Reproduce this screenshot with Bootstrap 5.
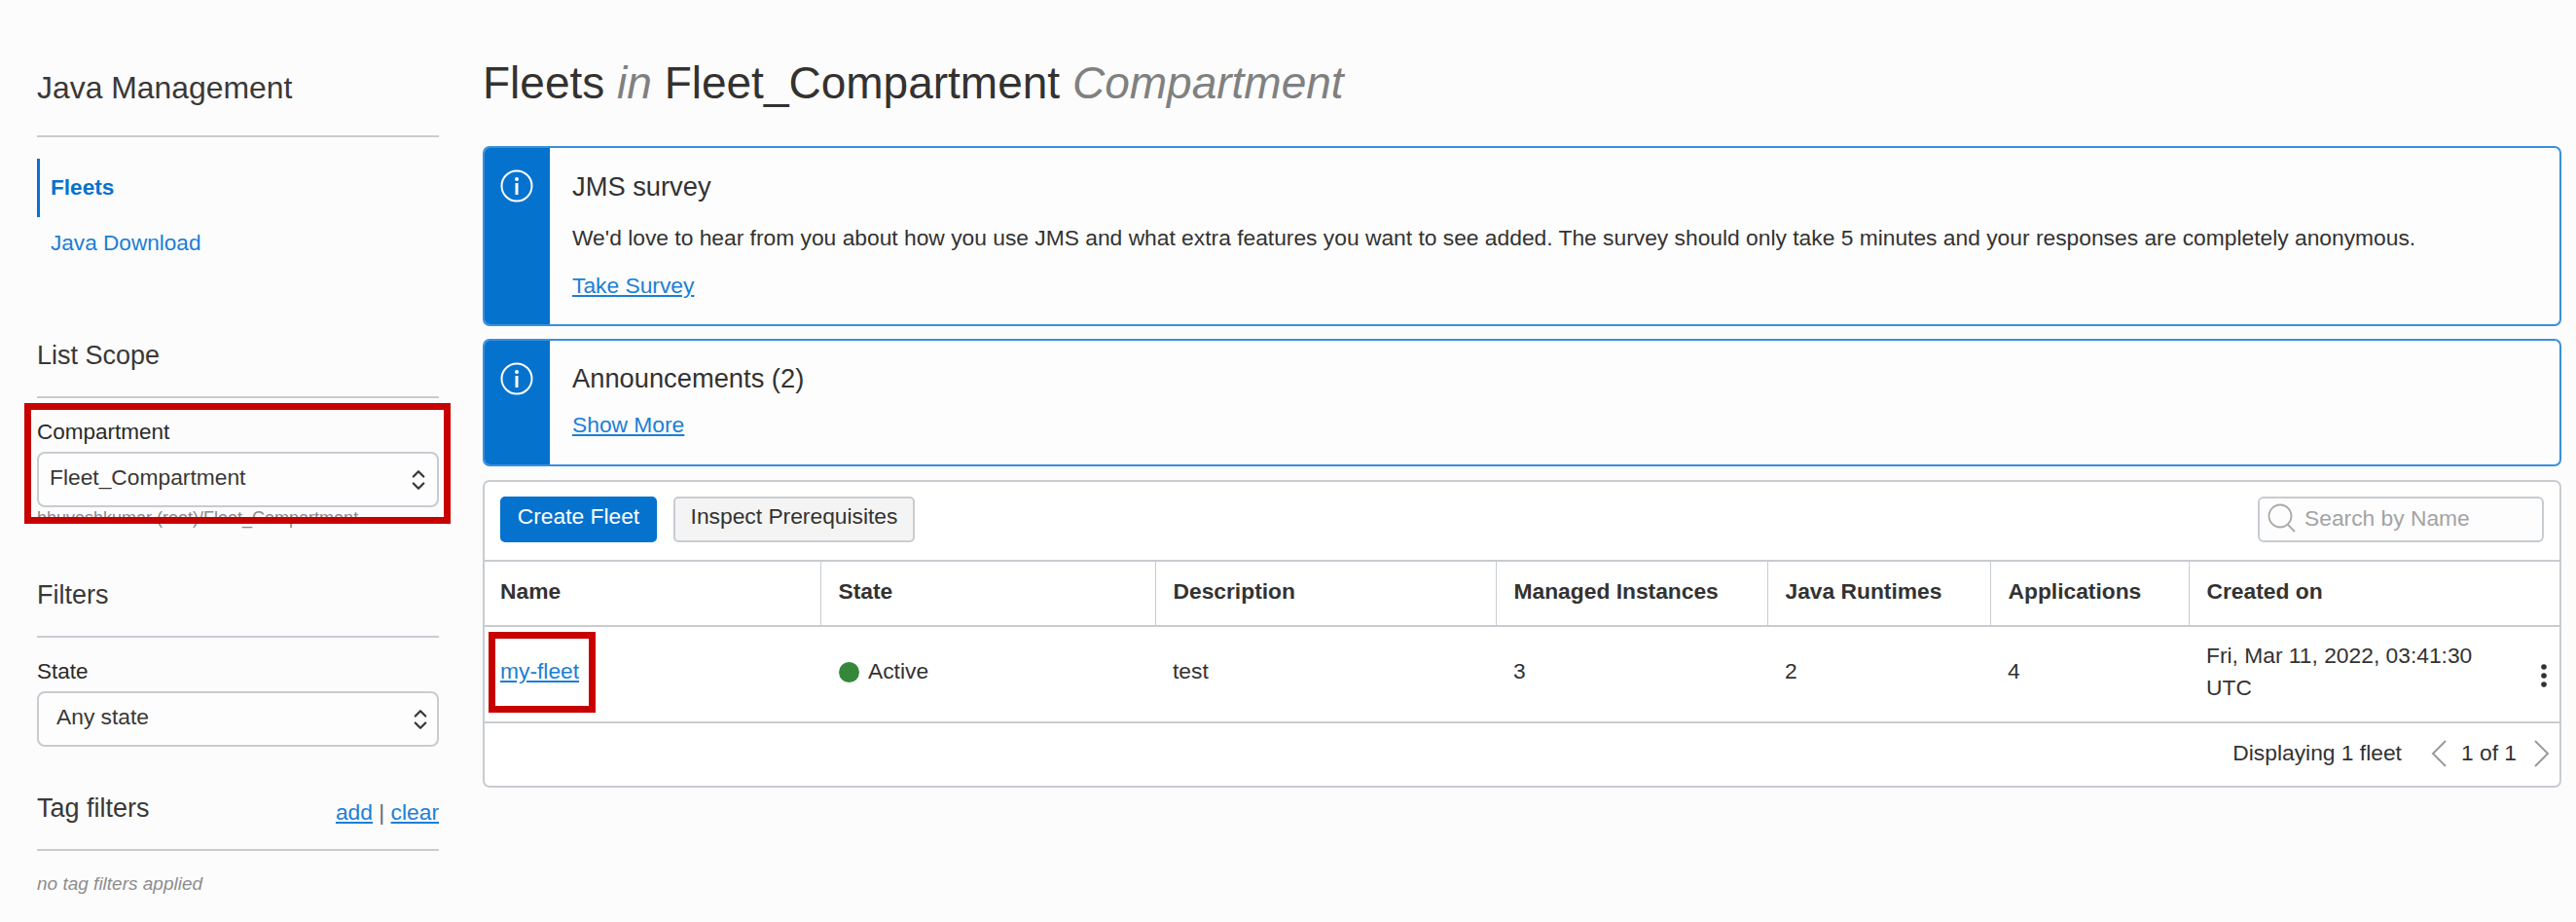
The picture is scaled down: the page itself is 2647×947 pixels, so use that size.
<!DOCTYPE html>
<html lang="en">
<head>
<meta charset="utf-8">
<title>Fleets</title>
<link href="https://cdn.jsdelivr.net/npm/bootstrap@5.3.0/dist/css/bootstrap.min.css" rel="stylesheet">
<style>
html,body{height:947px;overflow:hidden}
body{background:#fcfcfc;font-family:"Liberation Sans",Arial,sans-serif;font-size:22.8px;color:#333231}
a{color:#1b7fd6}
.page-wrap{padding:0 15px 0 38px;gap:45px;height:947px}
.side-col{width:413px;flex:none;padding-top:70px}
.main-col{flex:1 1 auto;min-width:0;padding-top:60px}
.side-head{font-size:27px;line-height:40px;color:#3a3836;border-bottom:2px solid #c8ccd1;margin:0;font-weight:400}
.head-a{padding-bottom:29px;font-size:31.9px}
.head-b{padding-bottom:22px;margin-top:65px}
.head-c{padding-bottom:22px;margin-top:48px}
.head-d{padding-bottom:22px;margin-top:43px}
.side-nav{margin-top:22px}
.side-link{display:block;height:60px;line-height:60px;padding-left:11px;font-size:22.6px;color:#1b7fd6;text-decoration:none;border-left:3px solid transparent}
.side-link.on{font-weight:700;color:#0572ce;border-left-color:#0572ce}
.side-link.off{margin-top:-3px}
.comp-field{margin-top:22px}
.field-label{font-size:22.5px;line-height:26px;color:#2b2a28;margin:0 0 7px;display:block}
.oj-select{height:57px;border:2px solid #c8ccd1;border-radius:8px;background-color:#fdfdfd;font-size:22.8px;color:#3a3836;padding:0 40px 5px 11px;background-image:url("data:image/svg+xml,%3Csvg xmlns='http://www.w3.org/2000/svg' viewBox='0 0 16 26'%3E%3Cpath d='M2 9l6-6 6 6M2 17l6 6 6-6' fill='none' stroke='%233a3836' stroke-width='2.6' stroke-linecap='round' stroke-linejoin='round'/%3E%3C/svg%3E");background-repeat:no-repeat;background-position:right 12px center;background-size:14px 24px}
.oj-select.wide-pad{padding-left:18px;background-position:right 10px center}
.path-hint{font-size:18px;line-height:22px;color:#8a8a8a;white-space:nowrap}
.red-frame{position:absolute;border:7px solid #c70000;pointer-events:none}
.frame-comp{left:-13px;right:-12px;top:-17px;bottom:5px}
.field-box{margin-top:22px}
.tag-links{font-size:22.8px;line-height:26px;color:#6b6b6b;position:relative;top:4px}
.no-tags{font-size:19px;font-style:italic;color:#8d8d8d;line-height:24px;margin-top:22px}
.page-title{font-size:46px;line-height:50px;font-weight:400;color:#333231;margin:0 0 40px}
.page-title em{color:#808080}
.info-box{border:2px solid #3a8fdc;border-radius:7px;background:#fdfdfd;overflow:hidden}
.info-one{height:185px}
.info-two{height:131px;margin-top:13px}
.info-side{width:69px;flex:none;background:#0572ce;margin:-2px 0 -2px -2px;padding-top:22px;text-align:center}
.info-main{padding-left:23px}
.info-title{font-size:27.3px;line-height:36px;color:#333231;font-weight:400;margin:0}
.info-one .info-title{padding-top:22px}
.info-two .info-title{padding-top:21px}
.info-text{font-size:22.8px;line-height:30px;margin:19px 0 0}
.info-link{font-size:22.8px;line-height:30px;display:inline-block}
.one-link{margin-top:19px}
.two-link{margin-top:14px}
.fleet-card{height:316px;margin-top:14px;border:2px solid #c8ccd1;border-radius:7px;background:#fff;overflow:hidden}
.tool-row{height:80px;padding:15px 16px 0 16px}
.oj-btn{height:47px;font-size:22.8px;line-height:1;padding:0 8px 6px;border-radius:5px}
.btn-main{background:#0572ce;color:#fff;border:2px solid #0572ce;width:161px;margin-right:17px}
.btn-alt{background:#f4f4f4;color:#333231;border:2px solid #c8ccd1;width:248px}
.search-box{width:294px;height:47px;border:2px solid #c8ccd1;border-radius:6px;background:#fdfdfd;padding:0 0 3px 8px;color:#a3a3a3;font-size:22.8px}
.search-box input{border:0;outline:0;background:transparent;width:240px;margin-left:8px;font-size:22.8px;padding:0}
.search-box input::placeholder{color:#a3a3a3;opacity:1}
.fleet-table{table-layout:fixed;width:100%;margin:0;--bs-table-bg:transparent;border-collapse:collapse}
.fleet-table th,.fleet-table td{padding:0 18px;vertical-align:middle;font-size:22.8px;color:#333231}
.fleet-table th:first-child,.fleet-table td:first-child{padding-left:16px}
.fleet-table thead tr{height:67px}
.fleet-table th{font-weight:700;padding-bottom:5px;border-top:2px solid #c8ccd1;border-bottom:2px solid #c8ccd1;border-right:1px solid #c8ccd1}
.fleet-table th:last-child{border-right:0}
.fleet-table tbody tr{height:99px}
.fleet-table td{border-bottom:2px solid #c8ccd1;line-height:33px;padding-bottom:6px;position:relative}
.c-a{width:345px}.c-b{width:344px}.c-c{width:350px}.c-d{width:279px}.c-e{width:229px}.c-f{width:204px}
.status-dot{display:inline-block;width:21px;height:21px;border-radius:50%;background:#35883a;vertical-align:-4px;margin-right:9px;margin-left:1px}
.frame-fleet{left:4px;top:5px;width:110px;height:83px}
.row-menu{position:absolute;right:12px;top:37px;line-height:0}
.foot-row{height:67px;padding-right:9px;padding-bottom:6px;font-size:22.8px}
.foot-gap{margin-right:29px}
.page-num{margin:0 17px 0 14px}
</style>
</head>
<body>
<div class="d-flex page-wrap">
  <aside class="side-col">
    <h2 class="side-head head-a">Java Management</h2>
    <nav class="side-nav">
      <a class="side-link on" href="#">Fleets</a>
      <a class="side-link off" href="#">Java Download</a>
    </nav>
    <h2 class="side-head head-b">List Scope</h2>
    <div class="comp-field position-relative">
      <label class="field-label" for="comp">Compartment</label>
      <select class="form-select oj-select" id="comp"><option>Fleet_Compartment</option></select>
      <div class="path-hint">bhuveshkumar (root)/Fleet_Compartment</div>
      <div class="red-frame frame-comp"></div>
    </div>
    <h2 class="side-head head-c">Filters</h2>
    <div class="field-box">
      <label class="field-label" for="st">State</label>
      <select class="form-select oj-select wide-pad" id="st"><option>Any state</option></select>
    </div>
    <div class="side-head head-d d-flex justify-content-between align-items-center">
      <span>Tag filters</span>
      <span class="tag-links"><a href="#">add</a> | <a href="#">clear</a></span>
    </div>
    <div class="no-tags">no tag filters applied</div>
  </aside>
  <main class="main-col">
    <h1 class="page-title">Fleets <em>in</em> Fleet_Compartment <em>Compartment</em></h1>
    <section class="info-box info-one d-flex">
      <div class="info-side">
        <svg width="34" height="34" viewBox="0 0 34 34" fill="none"><circle cx="17" cy="17" r="15.5" stroke="#fff" stroke-width="2"/><circle cx="17" cy="10" r="2" fill="#fff"/><rect x="15.5" y="14" width="3" height="12" fill="#fff"/></svg>
      </div>
      <div class="info-main">
        <h3 class="info-title">JMS survey</h3>
        <p class="info-text">We'd love to hear from you about how you use JMS and what extra features you want to see added. The survey should only take 5 minutes and your responses are completely anonymous.</p>
        <a class="info-link one-link" href="#">Take Survey</a>
      </div>
    </section>
    <section class="info-box info-two d-flex">
      <div class="info-side">
        <svg width="34" height="34" viewBox="0 0 34 34" fill="none"><circle cx="17" cy="17" r="15.5" stroke="#fff" stroke-width="2"/><circle cx="17" cy="10" r="2" fill="#fff"/><rect x="15.5" y="14" width="3" height="12" fill="#fff"/></svg>
      </div>
      <div class="info-main">
        <h3 class="info-title">Announcements (2)</h3>
        <a class="info-link two-link" href="#">Show More</a>
      </div>
    </section>
    <section class="fleet-card">
      <div class="tool-row d-flex justify-content-between align-items-start">
        <div class="d-flex">
          <button class="btn oj-btn btn-main" type="button">Create Fleet</button>
          <button class="btn oj-btn btn-alt" type="button">Inspect Prerequisites</button>
        </div>
        <div class="search-box d-flex align-items-center">
          <svg width="30" height="32" viewBox="0 0 30 32" fill="none" stroke="#a9a9a9" stroke-width="1.8"><circle cx="13" cy="14" r="11.5"/><path d="M21 23l7 7"/></svg>
          <input type="text" placeholder="Search by Name" aria-label="Search by Name">
        </div>
      </div>
      <table class="table fleet-table">
        <colgroup><col class="c-a"><col class="c-b"><col class="c-c"><col class="c-d"><col class="c-e"><col class="c-f"><col></colgroup>
        <thead><tr><th>Name</th><th>State</th><th>Description</th><th>Managed Instances</th><th>Java Runtimes</th><th>Applications</th><th>Created on</th></tr></thead>
        <tbody><tr>
          <td><a href="#">my-fleet</a><div class="red-frame frame-fleet"></div></td>
          <td><span class="status-dot"></span>Active</td>
          <td>test</td>
          <td>3</td>
          <td>2</td>
          <td>4</td>
          <td>Fri, Mar 11, 2022, 03:41:30<br>UTC
            <span class="row-menu"><svg width="8" height="26" viewBox="0 0 8 26" fill="#333231"><circle cx="4" cy="4" r="2.8"/><circle cx="4" cy="13" r="2.8"/><circle cx="4" cy="22" r="2.8"/></svg></span>
          </td>
        </tr></tbody>
      </table>
      <div class="foot-row d-flex justify-content-end align-items-center">
        <span class="foot-gap">Displaying 1 fleet</span>
        <svg width="18" height="30" viewBox="0 0 18 30" fill="none" stroke="#9a9a9a" stroke-width="2"><path d="M16 2L3 15l13 13"/></svg>
        <span class="page-num">1 of 1</span>
        <svg width="18" height="30" viewBox="0 0 18 30" fill="none" stroke="#9a9a9a" stroke-width="2"><path d="M2 2l13 13L2 28"/></svg>
      </div>
    </section>
  </main>
</div>
<script src="https://cdn.jsdelivr.net/npm/bootstrap@5.3.0/dist/js/bootstrap.bundle.min.js"></script>
</body>
</html>
